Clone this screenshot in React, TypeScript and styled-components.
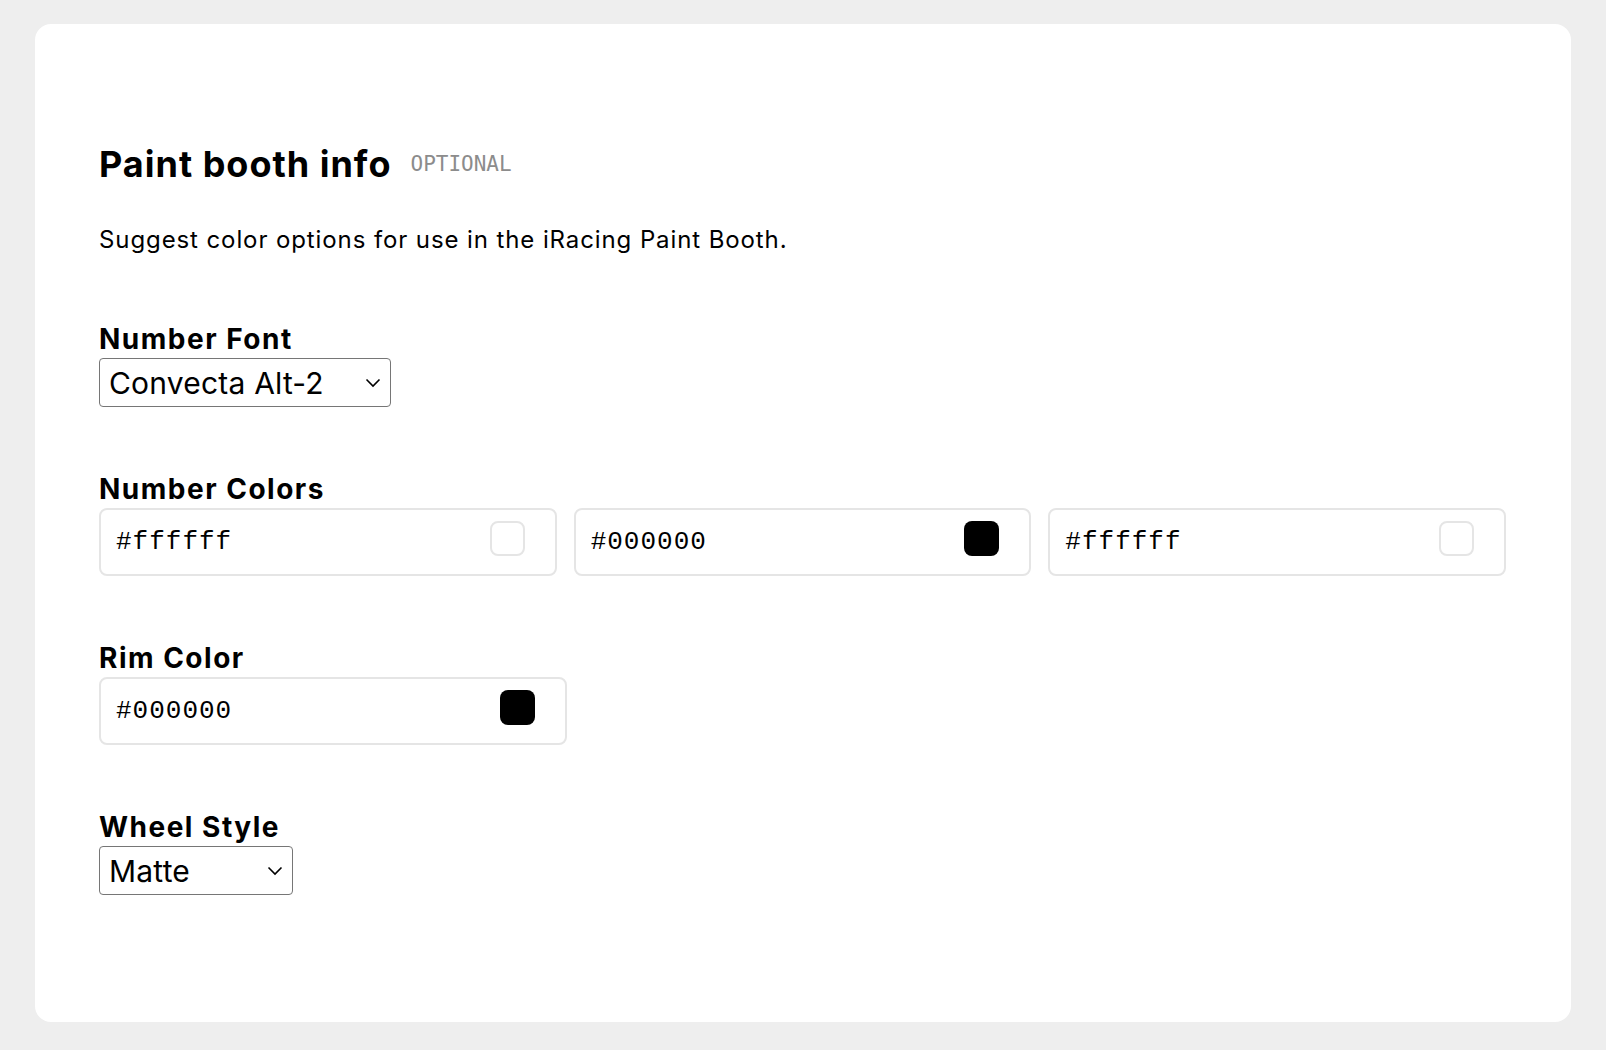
import styled, { createGlobalStyle } from 'styled-components'

const GlobalStyle = createGlobalStyle`
  html, body {
    margin: 0;
    background: #eeeeee;
  }
  body {
    font-family: Inter, 'Noto Sans', sans-serif;
    color: #000;
  }
`

const numberColors = ['#ffffff', '#000000', '#ffffff']

function Chevron() {
  return (
    <svg width="16" height="10" viewBox="0 0 16 10" fill="none">
      <path d="M1.5 1.5 L8 8 L14.5 1.5" stroke="#000" strokeWidth="1.6" />
    </svg>
  )
}

function ColorInput({ value, wide }: { value: string; wide?: boolean }) {
  return (
    <ColorBox wide={wide}>
      <HexText>{value}</HexText>
      <Swatch color={value} />
    </ColorBox>
  )
}

function Dropdown({ value, width }: { value: string; width: number }) {
  return (
    <SelectWrap width={width}>
      <SelectValue>{value}</SelectValue>
      <ChevronSlot>
        <Chevron />
      </ChevronSlot>
    </SelectWrap>
  )
}

export default function App() {
  return (
    <Page>
      <GlobalStyle />
      <Card>
        <Header>
          <Title>Paint booth info</Title>
          <Tag>OPTIONAL</Tag>
        </Header>
        <Description>
          Suggest color options for use in the iRacing Paint Booth.
        </Description>

        <FieldBlock>
          <Label>Number Font</Label>
          <Dropdown value="Convecta Alt-2" width={292} />
        </FieldBlock>

        <FieldBlock>
          <Label>Number Colors</Label>
          <ColorRow>
            {numberColors.map((c, i) => (
              <ColorInput key={i} value={c} />
            ))}
          </ColorRow>
        </FieldBlock>

        <FieldBlock>
          <Label>Rim Color</Label>
          <ColorInput value="#000000" wide />
        </FieldBlock>

        <FieldBlock>
          <Label>Wheel Style</Label>
          <Dropdown value="Matte" width={194} />
        </FieldBlock>
      </Card>
    </Page>
  )
}

const Page = styled.div`
  padding: 24px 35px 28px;
`
const Card = styled.section`
  background: #fff;
  border-radius: 16px;
  padding: 118px 65px 127px 64px;
`
const Header = styled.div`
  display: flex;
  align-items: center;
  gap: 19px;
`
const Title = styled.h2`
  margin: 0;
  font-size: 36px;
  line-height: 44px;
  font-weight: 700;
  letter-spacing: 1px;
`
const Tag = styled.span`
  font-family: 'DejaVu Sans Mono', monospace;
  font-size: 21px;
  color: #8c8c8c;
`
const Description = styled.p`
  margin: 37px 0 0;
  font-size: 24px;
  line-height: 34px;
  letter-spacing: 0.9px;
`
const FieldBlock = styled.div`
  margin-top: 63px;
  &:first-of-type {
    margin-top: 67px;
  }
`
const Label = styled.div`
  font-size: 28px;
  line-height: 38px;
  font-weight: 700;
  letter-spacing: 1.5px;
`
const SelectWrap = styled.div<{ width: number }>`
  position: relative;
  box-sizing: border-box;
  width: ${(p) => p.width}px;
  height: 49px;
  border: 1px solid #767676;
  border-radius: 4px;
  display: flex;
  align-items: center;
  padding-left: 9px;
`
const SelectValue = styled.span`
  font-size: 30px;
  letter-spacing: 0.2px;
`
const ChevronSlot = styled.span`
  position: absolute;
  right: 9px;
  top: 50%;
  transform: translateY(-50%);
  display: flex;
`
const ColorRow = styled.div`
  display: grid;
  grid-template-columns: repeat(3, 1fr);
  gap: 17px;
`
const ColorBox = styled.div<{ wide?: boolean }>`
  box-sizing: border-box;
  height: 68px;
  width: ${(p) => (p.wide ? '468px' : 'auto')};
  border: 2px solid #e5e5e5;
  border-radius: 8px;
  display: flex;
  align-items: center;
  justify-content: space-between;
  padding: 0 30px 0 15px;
`
const HexText = styled.span`
  font-family: 'Liberation Mono', monospace;
  font-size: 26px;
  letter-spacing: 1px;
`
const Swatch = styled.span<{ color: string }>`
  box-sizing: border-box;
  width: 35px;
  height: 35px;
  margin-bottom: 8px;
  border-radius: 8px;
  background: ${(p) => p.color};
  border: ${(p) => (p.color === '#ffffff' ? '2px solid #e5e5e5' : 'none')};
`
